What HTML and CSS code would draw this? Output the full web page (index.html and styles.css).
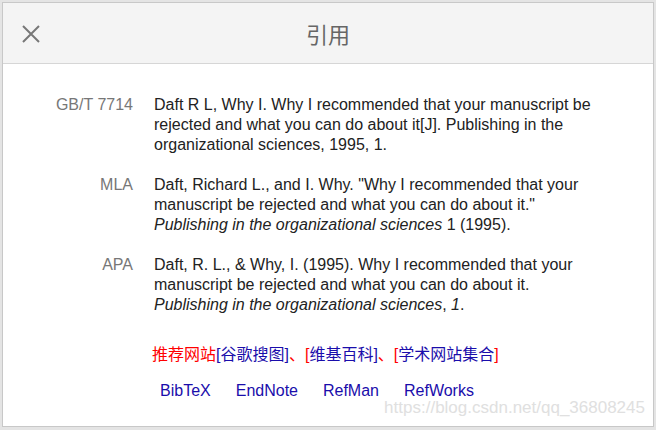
FILE: index.html
```html
<!DOCTYPE html>
<html lang="zh-CN">
<head>
<meta charset="utf-8">
<title>引用</title>
<link rel="stylesheet" href="styles.css">
</head>
<body>
<div class="dialog">
  <div class="header">
    <span class="close" aria-label="关闭">
      <svg width="20" height="20" viewBox="0 0 20 20"><path d="M2 2 L18 18 M18 2 L2 18" stroke="#777" stroke-width="2" fill="none"/></svg>
    </span>
    <h2 class="title">引用</h2>
  </div>
  <div class="content">
    <div class="cites">
      <div class="label">GB/T 7714</div>
      <div class="cite">Daft R L, Why I. Why I recommended that your manuscript be rejected and what you can do about it[J]. Publishing in the organizational sciences, 1995, 1.</div>
      <div class="label">MLA</div>
      <div class="cite">Daft, Richard L., and I. Why. "Why I recommended that your manuscript be rejected and what you can do about it." <i>Publishing in the organizational sciences</i> 1 (1995).</div>
      <div class="label">APA</div>
      <div class="cite">Daft, R. L., &amp; Why, I. (1995). Why I recommended that your manuscript be rejected and what you can do about it. <i>Publishing in the organizational sciences</i>, <i>1</i>.</div>
    </div>
    <div class="recommend"><span class="red">推荐网站</span><a href="#">[谷歌搜图]</a><span class="red">、[</span><a href="#">维基百科]</a><span class="red">、[</span><a href="#">学术网站集合</a><span class="red">]</span></div>
    <div class="exports">
      <a href="#">BibTeX</a>
      <a href="#">EndNote</a>
      <a href="#">RefMan</a>
      <a href="#">RefWorks</a>
    </div>
  </div>
  <div class="watermark">https://blog.csdn.net/qq_36808245</div>
</div>
</body>
</html>
```

FILE: styles.css
```css
html, body {
  margin: 0;
  padding: 0;
}
body {
  width: 656px;
  height: 430px;
  background: #e4e4e4;
  font-family: "Liberation Sans", Arial, "Noto Sans CJK SC", sans-serif;
  overflow: hidden;
}
.dialog {
  position: relative;
  margin: 2px 2px 0 2px;
  height: 425px;
  background: #fff;
  border: 1px solid #c8c8c8;
  box-sizing: border-box;
}
.header {
  position: relative;
  height: 60px;
  background: #f4f4f4;
  border-bottom: 1px solid #d6d6d6;
  display: flex;
  align-items: center;
  justify-content: center;
}
.close {
  position: absolute;
  left: 18px;
  top: 21px;
  width: 20px;
  height: 20px;
  display: block;
}
.close svg { display: block; }
.title {
  margin: 0;
  font-family: "Noto Sans CJK SC", sans-serif;
  font-weight: normal;
  font-size: 22px;
  color: #666;
}
.content {
  padding-top: 31px;
  font-size: 16px;
  line-height: 20px;
}
.cites {
  display: grid;
  grid-template-columns: 130px 448px;
  column-gap: 21px;
  row-gap: 20px;
}
.label {
  text-align: right;
  color: #777;
}
.cite {
  color: #222;
}
.recommend {
  margin-top: 30px;
  padding-left: 149px;
}
.red { color: #f00; }
a {
  color: #1a0dab;
  text-decoration: none;
}
.exports {
  margin-top: 16px;
  padding-left: 157px;
  display: flex;
  gap: 25px;
}
.watermark {
  position: absolute;
  right: 8px;
  bottom: 8px;
  font-size: 17px;
  color: #e0e0e0;
}
```
